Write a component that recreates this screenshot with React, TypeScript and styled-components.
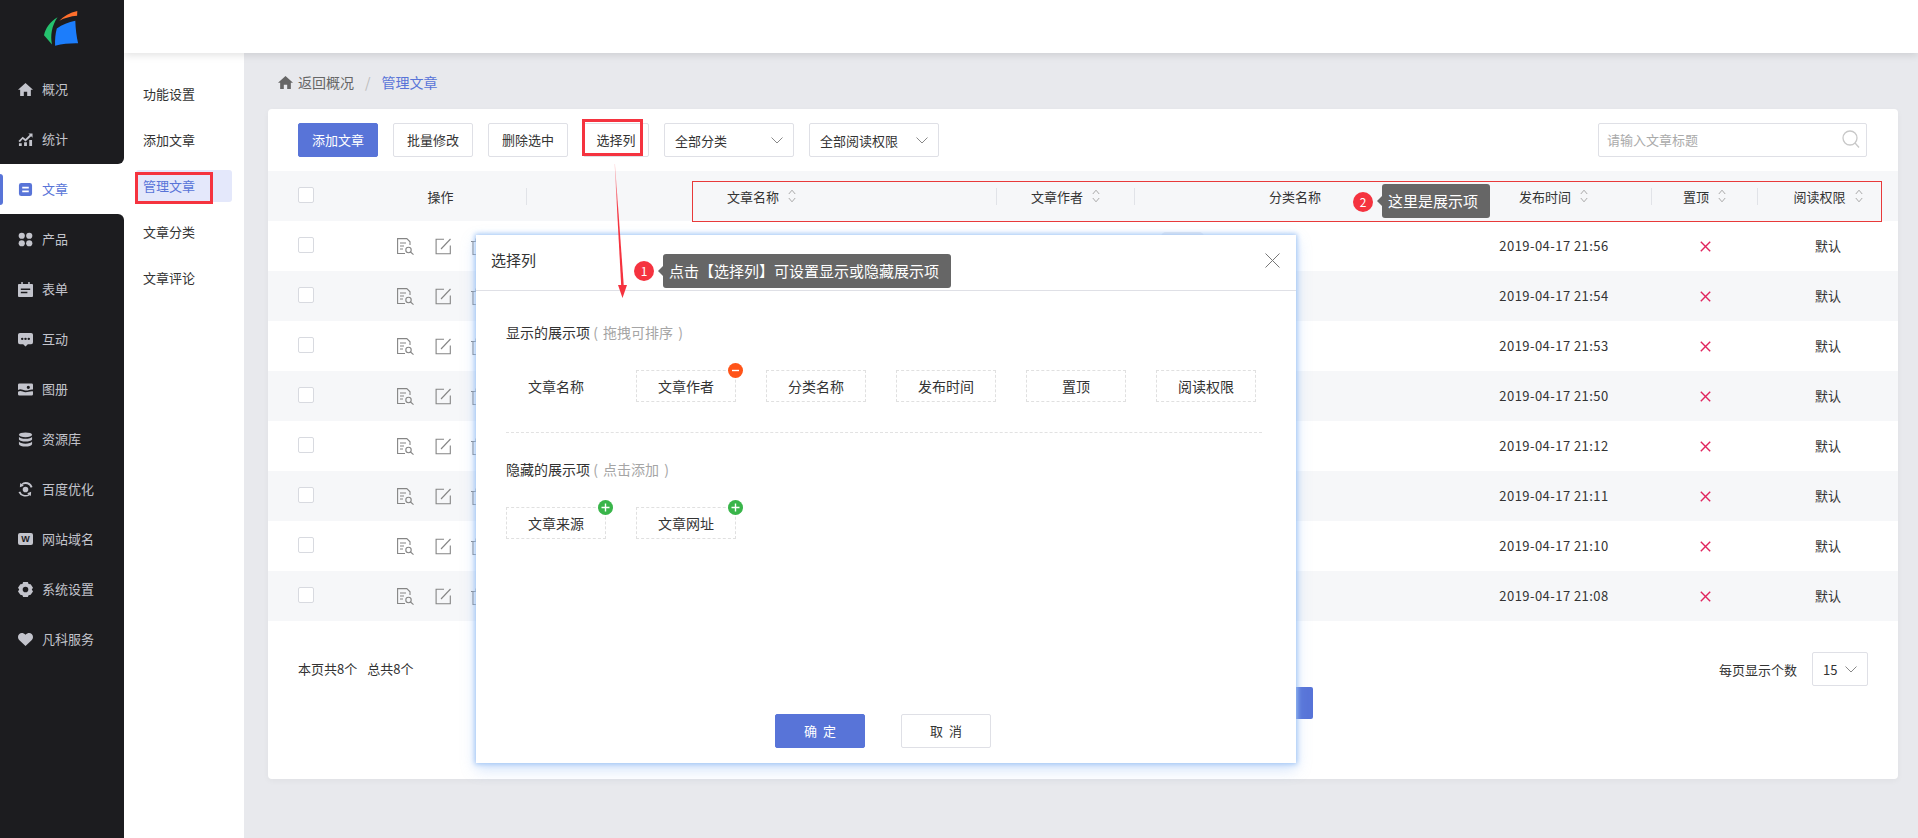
import * as React from 'react';
import styled, { createGlobalStyle } from 'styled-components';

const BLUE = '#5874d8';

const GlobalStyle = createGlobalStyle`
  html, body { margin: 0; padding: 0; height: 100%; }
  body {
    font-family: "Noto Sans CJK SC", "Liberation Sans", sans-serif;
    font-size: 13px;
    color: #333;
    background: #e8e9ed;
    overflow: hidden;
  }
  * { box-sizing: border-box; }
`;

const Page = styled.div`
  position: relative;
  display: flex;
  width: 1918px;
  height: 838px;
  overflow: hidden;
`;

/* sidebar */
const Sidebar = styled.aside`
  position: relative;
  z-index: 3;
  width: 124px;
  flex: none;
  display: flex;
  flex-direction: column;
  background: #fff;
`;
const NavTop = styled.div`
  background: #1c1c1f;
  border-bottom-right-radius: 6px;
`;
const NavBottom = styled.div`
  flex: 1;
  background: #1c1c1f;
  border-top-right-radius: 6px;
`;
const Logo = styled.svg`
  display: block;
  width: 124px;
  height: 64px;
`;
const NavItem = styled.div<{ $active?: boolean }>`
  position: relative;
  height: 50px;
  display: flex;
  align-items: center;
  padding-left: 18px;
  gap: 9px;
  line-height: 20px;
  color: ${p => (p.$active ? BLUE : '#c3c4cc')};
  background: ${p => (p.$active ? '#fff' : 'transparent')};
  svg { width: 15px; height: 15px; flex: none; fill: currentColor; }
`;
const NavMark = styled.i`
  position: absolute;
  left: 0;
  top: 10px;
  width: 3px;
  height: 31px;
  background: ${BLUE};
  border-radius: 0 3px 3px 0;
`;
const DomainIcon = styled.span`
  width: 15px;
  height: 12px;
  flex: none;
  border-radius: 2px;
  background: #c3c4cc;
  color: #1c1c1f;
  font: bold 9px/12px "Liberation Sans", sans-serif;
  text-align: center;
`;

/* main column */
const Main = styled.div`
  flex: 1;
  display: flex;
  flex-direction: column;
  min-width: 0;
`;
const TopBar = styled.header`
  position: relative;
  z-index: 2;
  height: 53px;
  flex: none;
  background: #fff;
  box-shadow: 0 2px 8px rgba(0, 0, 0, 0.12);
`;
const Body = styled.div`
  flex: 1;
  display: flex;
  min-height: 0;
`;
const SubNav = styled.nav`
  width: 120px;
  flex: none;
  background: #fff;
  padding: 25px 12px 0;
  display: flex;
  flex-direction: column;
  gap: 14px;
`;
const SubItem = styled.div<{ $active?: boolean }>`
  position: relative;
  height: 32px;
  line-height: 32px;
  padding-left: 7px;
  border-radius: 3px;
  color: ${p => (p.$active ? BLUE : '#333')};
  background: ${p => (p.$active ? '#e4e8fb' : 'transparent')};
`;
const SubMark = styled.i`
  position: absolute;
  left: -1px;
  top: 2px;
  width: 78px;
  height: 32px;
  border: 3px solid #f5333f;
`;
const Content = styled.main`
  flex: 1;
  min-width: 0;
  padding: 19px 20px 0 24px;
`;
const Crumb = styled.div`
  height: 20px;
  margin-bottom: 17px;
  padding-left: 10px;
  display: flex;
  align-items: center;
  line-height: 20px;
  font-size: 14px;
  color: #666;
  svg { width: 15px; height: 15px; fill: #666; margin-right: 5px; }
`;
const CrumbSep = styled.span`
  margin: 0 11px;
  color: #bbb;
`;
const CrumbNow = styled.span`
  color: ${BLUE};
`;

/* card */
const Card = styled.section`
  height: 670px;
  background: #fff;
  border-radius: 4px;
  box-shadow: 0 2px 6px rgba(0, 0, 0, 0.04);
`;
const Toolbar = styled.div`
  display: flex;
  gap: 15px;
  padding: 14px 31px 14px 30px;
`;
const Btn = styled.div<{ $primary?: boolean; $w?: number }>`
  position: relative;
  width: ${p => p.$w ?? 80}px;
  height: 34px;
  line-height: 31px;
  text-align: center;
  border-radius: 2px;
  border: 1px solid ${p => (p.$primary ? BLUE : '#dfe0e6')};
  background: ${p => (p.$primary ? BLUE : '#fff')};
  color: ${p => (p.$primary ? '#fff' : '#333')};
`;
const BtnMark = styled.i`
  position: absolute;
  left: -2px;
  top: -5px;
  width: 61px;
  height: 37px;
  border: 3px solid #f5333f;
`;
const SelectBox = styled.div<{ $w?: number }>`
  width: ${p => p.$w ?? 130}px;
  height: 34px;
  padding: 0 10px;
  display: flex;
  align-items: center;
  justify-content: space-between;
  border: 1px solid #dfe0e6;
  border-radius: 2px;
  background: #fff;
`;
const SearchBox = styled.div`
  width: 269px;
  height: 34px;
  margin-left: auto;
  padding: 0 6px 2px 8px;
  display: flex;
  align-items: center;
  justify-content: space-between;
  border: 1px solid #dfe0e6;
  border-radius: 2px;
  color: #aaa;
`;

/* table */
const COLS = '87px 172px 470px 138px 321px 196px 106px 140px';
const HeadRow = styled.div`
  position: relative;
  display: grid;
  grid-template-columns: ${COLS};
  height: 50px;
  background: #f6f7f9;
  align-items: center;
`;
const HeadCell = styled.div<{ $sep?: boolean }>`
  display: flex;
  align-items: center;
  justify-content: center;
  gap: 9px;
  height: 17px;
  line-height: 17px;
  border-right: ${p => (p.$sep ? '1px solid #e1e3e8' : '0')};
`;
const HeadMark = styled.i`
  position: absolute;
  left: 424px;
  top: 10px;
  width: 1190px;
  height: 41px;
  border: 1px solid #e83a3a;
`;
const Row = styled.div<{ $alt?: boolean }>`
  display: grid;
  grid-template-columns: ${COLS};
  height: 50px;
  align-items: center;
  background: ${p => (p.$alt ? '#f6f7f9' : '#fff')};
`;
const CheckCell = styled.div`
  padding: 0 0 2px 30px;
`;
const Check = styled.span`
  display: block;
  width: 16px;
  height: 16px;
  background: #fff;
  border: 1px solid #d8dae0;
  border-radius: 2px;
`;
const Actions = styled.div`
  display: flex;
  gap: 21px;
  padding-left: 42px;
  svg { width: 17px; height: 17px; flex: none; fill: none; stroke: #858585; stroke-width: 1.1; }
  svg:last-child { margin-left: -3px; }
`;
const Cell = styled.div`
  text-align: center;
  line-height: 20px;
`;
const DateCell = styled(Cell)`
  letter-spacing: 0.45px;
`;
const NoMark = styled.span`
  color: #e0245e;
  svg { display: block; margin: 0 auto; width: 11px; height: 11px; stroke: currentColor; stroke-width: 1.4; }
`;
const CellTag = styled.span`
  display: block;
  width: 43px;
  height: 28px;
  margin-left: 26px;
  border-radius: 5px;
  background: #eceef3;
`;

/* card footer */
const Footer = styled.div`
  display: flex;
  justify-content: space-between;
  align-items: center;
  padding: 31px 30px 0;
`;
const FooterCount = styled.div`
  display: flex;
  gap: 10px;
  line-height: 20px;
`;
const PageSize = styled.div`
  display: flex;
  align-items: center;
  gap: 15px;
`;
const SaveButton = styled.div`
  width: 90px;
  height: 32px;
  margin: 1px 0 0 955px;
  background: ${BLUE};
  border-radius: 2px;
`;

/* dialog */
const Dialog = styled.div`
  position: absolute;
  z-index: 5;
  left: 476px;
  top: 235px;
  width: 820px;
  height: 528px;
  background: #fff;
  box-shadow: 0 0 5px 1px #9fc4f5, 0 6px 14px rgba(120, 170, 240, 0.35);
`;
const DialogHead = styled.div`
  height: 56px;
  padding: 0 16px 5px 15px;
  display: flex;
  align-items: center;
  justify-content: space-between;
  border-bottom: 1px solid #dfe0e6;
  font-size: 15px;
  line-height: 24px;
  svg { width: 15px; height: 15px; stroke: #777; stroke-width: 1; }
`;
const DialogBody = styled.div`
  padding: 31px 34px 0 30px;
  font-size: 13px;
`;
const GroupTitle = styled.div`
  height: 20px;
  line-height: 20px;
  font-size: 14px;
`;
const Muted = styled.span`
  color: #a5a5a5;
  word-spacing: 2px;
`;
const Chips = styled.div`
  display: flex;
  gap: 30px;
  margin-top: 28px;
`;
const Chip = styled.div<{ $plain?: boolean }>`
  position: relative;
  width: 100px;
  height: 32px;
  line-height: 30px;
  text-align: center;
  font-size: 14px;
  border: 1px dashed ${p => (p.$plain ? 'transparent' : '#e0e0e0')};
`;
const Badge = styled.span<{ $add?: boolean }>`
  position: absolute;
  right: -8px;
  top: -8px;
  width: 15px;
  height: 15px;
  border-radius: 50%;
  background: ${p => (p.$add ? '#39b54a' : '#ff5419')};
  svg { display: block; width: 15px; height: 15px; stroke: #fff; stroke-width: 1.4; }
`;
const Dashed = styled.div`
  margin: 30px 0 26px;
  border-top: 1px dashed #e2e2e2;
`;
const DialogFoot = styled.div`
  position: absolute;
  left: 0;
  right: 0;
  bottom: 15px;
  display: flex;
  justify-content: center;
  gap: 36px;
  padding-right: 6px;
  word-spacing: 3px;
`;

/* guide notes laid over the page */
const Tip = styled.div<{ $x: number; $y: number; $w: number }>`
  position: absolute;
  z-index: 7;
  left: ${p => p.$x}px;
  top: ${p => p.$y}px;
  width: ${p => p.$w}px;
  height: 34px;
  padding-left: 6px;
  line-height: 34px;
  font-size: 15px;
  white-space: nowrap;
  color: #fff;
  background: #666;
  border-radius: 3px;
  &::before {
    content: '';
    position: absolute;
    left: -5px;
    top: 12px;
    border: 5px solid transparent;
    border-left: 0;
    border-right-color: #666;
  }
`;
const TipDot = styled.span<{ $x: number; $y: number }>`
  position: absolute;
  z-index: 7;
  left: ${p => p.$x}px;
  top: ${p => p.$y}px;
  width: 20px;
  height: 20px;
  border-radius: 50%;
  background: #f5333f;
  color: #fff;
  font-size: 12px;
  line-height: 20px;
  text-align: center;
`;
const GuideArrow = styled.svg`
  position: absolute;
  z-index: 6;
  left: 600px;
  top: 150px;
  width: 40px;
  height: 160px;
  pointer-events: none;
`;

const Chevron = () => (
  <svg width="12" height="7" viewBox="0 0 12 7" fill="none" stroke="#888" strokeWidth="1">
    <path d="M.5.5 6 6 11.5.5" />
  </svg>
);

const Sort = () => (
  <svg width="8" height="14" viewBox="0 0 8 14" fill="none" stroke="#aaa" strokeWidth="1">
    <path d="M.8 5 4 1.2 7.200 5M.8 9 4 12.800 7.200 9" />
  </svg>
);

const HomeIcon = () => (
  <svg viewBox="0 0 16 16"><path d="M8 1 16 8.300h-2.300V15H9.800v-4.500H6.200V15H2.300V8.300H0z" /></svg>
);
const StatsIcon = () => (
  <svg viewBox="0 0 16 16">
    <path d="M1 12h3v3H1zM6.500 11h3v4h-3zM12 8.500h3V15h-3z" />
    <path d="M.5 9.500 5 5l3 2.500L12.500 3 11 1.500h4.500V6L14 4.500 8 10 5 7.500l-3 3.500z" />
  </svg>
);
const ArticleIcon = () => (
  <svg viewBox="0 0 16 16">
    <path fillRule="evenodd" d="M3.500 1h9A2.500 2.500 0 0 1 15 3.500v9a2.500 2.500 0 0 1-2.500 2.500h-9A2.500 2.500 0 0 1 1 12.500v-9A2.500 2.500 0 0 1 3.500 1zM4.500 5v2h7V5zm0 4v2h7V9z" />
  </svg>
);
const ProductIcon = () => (
  <svg viewBox="0 0 16 16">
    <circle cx="4" cy="4" r="3.300" /><circle cx="12" cy="4" r="3.300" />
    <circle cx="4" cy="12" r="3.300" /><circle cx="12" cy="12" r="3.300" />
  </svg>
);
const FormIcon = () => (
  <svg viewBox="0 0 16 16">
    <path fillRule="evenodd" d="M3.500 0h1.600v2h5.800V0h1.600v2H15a1 1 0 0 1 1 1v12a1 1 0 0 1-1 1H1a1 1 0 0 1-1-1V3a1 1 0 0 1 1-1h2.500zM3 7v1.500h10V7zm0 3.500V12h7v-1.500z" />
  </svg>
);
const ChatIcon = () => (
  <svg viewBox="0 0 16 16">
    <path fillRule="evenodd" d="M2 1h12a2 2 0 0 1 2 2v8a2 2 0 0 1-2 2h-3.500L8 15.500 5.500 13H2a2 2 0 0 1-2-2V3a2 2 0 0 1 2-2zm2.500 5a1.300 1.300 0 1 0 0 2.600 1.300 1.300 0 0 0 0-2.600zm3.500 0a1.300 1.300 0 1 0 0 2.600A1.300 1.300 0 0 0 8 6zm3.500 0a1.300 1.300 0 1 0 0 2.600 1.300 1.300 0 0 0 0-2.600z" />
  </svg>
);
const AlbumIcon = () => (
  <svg viewBox="0 0 16 16">
    <path fillRule="evenodd" d="M1.500 1.500h13A1.500 1.500 0 0 1 16 3v10a1.500 1.500 0 0 1-1.500 1.500h-13A1.500 1.500 0 0 1 0 13V3a1.500 1.500 0 0 1 1.500-1.500zM11 4a1.700 1.700 0 1 0 0 3.400A1.700 1.700 0 0 0 11 4zM0 8.500v2c3-2 5 .5 8 .5s5-1.500 8-1V8c-3-.5-5 1.300-8 1S3 6.500 0 8.500z" />
  </svg>
);
const DataIcon = () => (
  <svg viewBox="0 0 16 16">
    <ellipse cx="8" cy="3" rx="7" ry="2.600" />
    <path d="M1 5c1 1.500 3.500 2.200 7 2.200S14 6.500 15 5v3c-1 1.500-3.500 2.200-7 2.200S2 9.500 1 8zM1 10.200c1 1.500 3.500 2.200 7 2.200s6-.7 7-2.200V13c-.5 1.500-3.500 2.500-7 2.500S1.500 14.500 1 13z" />
  </svg>
);
const SeoIcon = () => (
  <svg viewBox="0 0 16 16">
    <path fillRule="evenodd" d="M8 0a8 8 0 0 1 7.500 5.200L13.600 6A6 6 0 0 0 4.800 3l1.400 1L2 5.500 2.300 1l1.200 1A8 8 0 0 1 8 0zM8 5a3 3 0 1 1 0 6 3 3 0 0 1 0-6zM.5 10.800l1.900-.8a6 6 0 0 0 8.800 3l-1.400-1 4.200-1.500-.3 4.500-1.200-1A8 8 0 0 1 .5 10.800z" />
  </svg>
);
const GearIcon = () => (
  <svg viewBox="0 0 16 16">
    <path fillRule="evenodd" d="M5.500 0h5l.8 2 2.200.4L16 6l-1.300 2L16 10l-2.500 3.600-2.200.4-.8 2h-5l-.8-2-2.200-.4L0 10l1.300-2L0 6l2.500-3.600L4.700 2zM8 5a3 3 0 1 0 0 6 3 3 0 0 0 0-6z" />
  </svg>
);
const HeartIcon = () => (
  <svg viewBox="0 0 16 16">
    <path d="M8 15 1.500 8.800C-.5 6.800-.4 3.600 1.400 2 3.200.4 6 .700 8 3c2-2.300 4.800-2.600 6.600-1 1.800 1.600 1.900 4.800-.1 6.800z" />
  </svg>
);

const DocSearch = () => (
  <svg viewBox="0 0 17 17">
    <path d="M8 15.500H.6V.6h9.200L13 3.800V7" />
    <path d="M3 5h6M3 8h4M3 11h3" />
    <circle cx="11.500" cy="12" r="2.700" />
    <path d="m13.500 14 3 2.600" />
  </svg>
);
const EditBox = () => (
  <svg viewBox="0 0 17 17">
    <path d="M9 1.200H1.100v14.600h14.200V7.500" />
    <path d="M6 11 15.500 1" />
  </svg>
);
const Trash = () => (
  <svg viewBox="0 0 17 17">
    <path d="M1 3.500h15M6 3.500V1h5v2.500M3 3.500v13h11v-13M7 6.500v7M10 6.500v7" />
  </svg>
);

const NAV_TOP = [
  { name: '概况', icon: <HomeIcon /> },
  { name: '统计', icon: <StatsIcon /> },
];
const NAV_BOTTOM = [
  { name: '产品', icon: <ProductIcon /> },
  { name: '表单', icon: <FormIcon /> },
  { name: '互动', icon: <ChatIcon /> },
  { name: '图册', icon: <AlbumIcon /> },
  { name: '资源库', icon: <DataIcon /> },
  { name: '百度优化', icon: <SeoIcon /> },
  { name: '网站域名', icon: <DomainIcon>W</DomainIcon> },
  { name: '系统设置', icon: <GearIcon /> },
  { name: '凡科服务', icon: <HeartIcon /> },
];
const TIMES = ['21:56', '21:54', '21:53', '21:50', '21:12', '21:11', '21:10', '21:08'];
const SHOWN = ['文章作者', '分类名称', '发布时间', '置顶', '阅读权限'];

export default function App() {
  return (
    <Page>
      <GlobalStyle />
      <Sidebar>
        <NavTop>
          <Logo viewBox="0 0 124 64">
            <path fill="#25c26e" d="M57.500 17.300C50 22 45.500 28 44 35.300l8 9.200c-1.800-9-.3-18.500 5.500-27.200z" />
            <path fill="#ff6f2c" d="M59.300 20.800c4.500-5 10.500-8.200 18-9.800l-.2 4.800c-6.500.5-12.500 2.200-17.800 5z" />
            <path fill="#1c7dfb" d="M56.800 28.500c5.500-4 11.500-6.500 18.500-7.800.3 8 1.200 15.500 2.800 22.600-7.500-.2-15 .6-23 2.400-.3-6 .3-12 1.700-17.200z" />
          </Logo>
          {NAV_TOP.map(n => (
            <NavItem key={n.name}>{n.icon}{n.name}</NavItem>
          ))}
        </NavTop>
        <NavItem $active>
          <NavMark />
          <ArticleIcon />
          文章
        </NavItem>
        <NavBottom>
          {NAV_BOTTOM.map(n => (
            <NavItem key={n.name}>{n.icon}{n.name}</NavItem>
          ))}
        </NavBottom>
      </Sidebar>

      <Main>
        <TopBar />
        <Body>
          <SubNav>
            <SubItem>功能设置</SubItem>
            <SubItem>添加文章</SubItem>
            <SubItem $active>
              管理文章
              <SubMark />
            </SubItem>
            <SubItem>文章分类</SubItem>
            <SubItem>文章评论</SubItem>
          </SubNav>
          <Content>
            <Crumb>
              <HomeIcon />
              返回概况
              <CrumbSep>/</CrumbSep>
              <CrumbNow>管理文章</CrumbNow>
            </Crumb>
            <Card>
              <Toolbar>
                <Btn $primary>添加文章</Btn>
                <Btn>批量修改</Btn>
                <Btn>删除选中</Btn>
                <Btn $w={66}>
                  选择列
                  <BtnMark />
                </Btn>
                <SelectBox>全部分类<Chevron /></SelectBox>
                <SelectBox>全部阅读权限<Chevron /></SelectBox>
                <SearchBox>
                  请输入文章标题
                  <svg width="18" height="20" viewBox="0 0 18 20" fill="none" stroke="#c8c8c8" strokeWidth="1.300">
                    <circle cx="8" cy="9" r="7" />
                    <path d="m13 14 4 4.500" />
                  </svg>
                </SearchBox>
              </Toolbar>

              <HeadRow>
                <CheckCell><Check /></CheckCell>
                <HeadCell $sep>操作</HeadCell>
                <HeadCell $sep>文章名称<Sort /></HeadCell>
                <HeadCell $sep>文章作者<Sort /></HeadCell>
                <HeadCell $sep>分类名称</HeadCell>
                <HeadCell $sep>发布时间<Sort /></HeadCell>
                <HeadCell $sep>置顶<Sort /></HeadCell>
                <HeadCell>阅读权限<Sort /></HeadCell>
                <HeadMark />
              </HeadRow>
              {TIMES.map((t, i) => (
                <Row key={t} $alt={i % 2 === 1}>
                  <CheckCell><Check /></CheckCell>
                  <Actions>
                    <DocSearch />
                    <EditBox />
                    <Trash />
                  </Actions>
                  <Cell />
                  <Cell />
                  <Cell>{i === 0 && <CellTag />}</Cell>
                  <DateCell>2019-04-17 {t}</DateCell>
                  <Cell>
                    <NoMark>
                      <svg viewBox="0 0 11 11"><path d="m.8.8 9.400 9.400M10.200.8.8 10.200" /></svg>
                    </NoMark>
                  </Cell>
                  <Cell>默认</Cell>
                </Row>
              ))}

              <Footer>
                <FooterCount>
                  <span>本页共8个</span>
                  <span>总共8个</span>
                </FooterCount>
                <PageSize>
                  每页显示个数
                  <SelectBox $w={56}>15<Chevron /></SelectBox>
                </PageSize>
              </Footer>
              <SaveButton />
            </Card>
          </Content>
        </Body>
      </Main>

      <Dialog>
        <DialogHead>
          选择列
          <svg viewBox="0 0 15 15" fill="none"><path d="m.5.5 14 14M14.500.5l-14 14" /></svg>
        </DialogHead>
        <DialogBody>
          <GroupTitle>显示的展示项 <Muted>( 拖拽可排序 )</Muted></GroupTitle>
          <Chips>
            <Chip $plain>文章名称</Chip>
            {SHOWN.map((name, i) => (
              <Chip key={name}>
                {name}
                {i === 0 && (
                  <Badge>
                    <svg viewBox="0 0 15 15"><path d="M4 7.500h7" /></svg>
                  </Badge>
                )}
              </Chip>
            ))}
          </Chips>
          <Dashed />
          <GroupTitle>隐藏的展示项 <Muted>( 点击添加 )</Muted></GroupTitle>
          <Chips>
            {['文章来源', '文章网址'].map(name => (
              <Chip key={name}>
                {name}
                <Badge $add>
                  <svg viewBox="0 0 15 15"><path d="M3.500 7.500h8M7.500 3.500v8" /></svg>
                </Badge>
              </Chip>
            ))}
          </Chips>
        </DialogBody>
        <DialogFoot>
          <Btn $primary $w={90}>确 定</Btn>
          <Btn $w={90}>取 消</Btn>
        </DialogFoot>
      </Dialog>

      <GuideArrow viewBox="0 0 40 160">
        <defs>
          <linearGradient id="guideFade" x1="0" y1="0" x2="0" y2="1">
            <stop offset="0" stopColor="#f5333f" stopOpacity="0.25" />
            <stop offset="0.4" stopColor="#f5333f" />
          </linearGradient>
        </defs>
        <path d="M15 14 23.800 136 21.200 136 14.600 14z" fill="url(#guideFade)" />
        <path d="M18 135h9l-4.500 13z" fill="#f5333f" />
      </GuideArrow>

      <TipDot $x={634} $y={261}>1</TipDot>
      <Tip $x={663} $y={254} $w={288}>点击【选择列】可设置显示或隐藏展示项</Tip>
      <TipDot $x={1353} $y={192}>2</TipDot>
      <Tip $x={1382} $y={184} $w={108}>这里是展示项</Tip>
    </Page>
  );
}
